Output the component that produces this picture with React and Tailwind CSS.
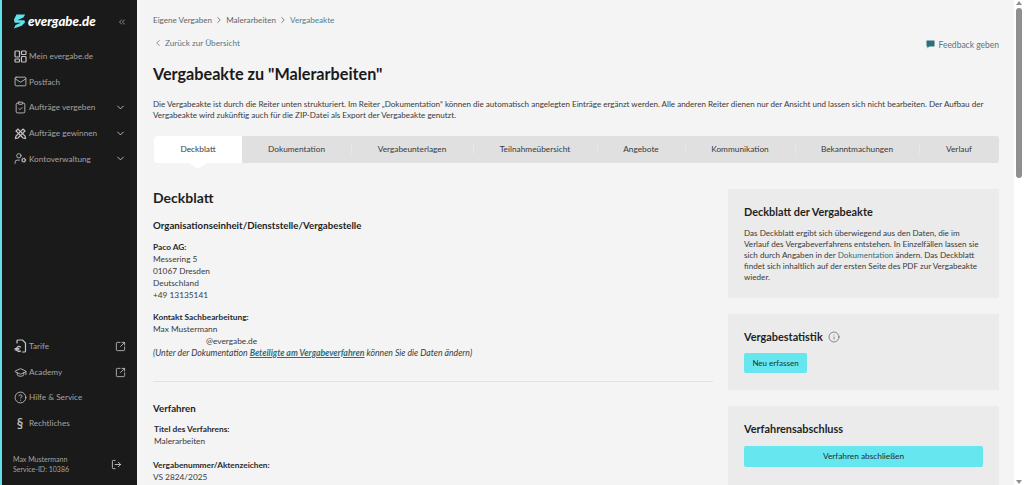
import { ChevronDown, ChevronRight, ChevronLeft, ChevronsLeft, Mail, ClipboardCheck, UserCog, GraduationCap, CircleHelp, SquareArrowOutUpRight, LogOut, Info } from 'lucide-react'

function TilesIcon() {
  return (
    <svg width="13" height="13" viewBox="0 0 13 13" fill="none" stroke="currentColor" strokeWidth="1.2">
      <rect x="1" y="1" width="4.5" height="6" rx="0.8" />
      <rect x="7.5" y="1" width="4.5" height="3.5" rx="0.8" />
      <rect x="1" y="9" width="4.5" height="3" rx="0.8" />
      <rect x="7.5" y="6.5" width="4.5" height="5.5" rx="0.8" />
    </svg>
  )
}

function CrossIcon() {
  return (
    <svg width="13" height="13" viewBox="0 0 13 13" fill="none" stroke="currentColor" strokeWidth="1.2" strokeLinecap="round">
      <path d="M2 4 L4 2 L11 9 L11.5 11.5 L9 11 Z" />
      <path d="M11 4 L9 2 L2 9 L1.5 11.5 L4 11 Z" />
    </svg>
  )
}

function EuroDocIcon() {
  return (
    <svg width="13" height="14" viewBox="0 0 13 14" fill="none" stroke="currentColor" strokeWidth="1.2" strokeLinecap="round">
      <path d="M3 4 V2 A1 1 0 0 1 4 1 H8.5 L11.5 4 V12 A1 1 0 0 1 10.5 13 H8.5" />
      <path d="M6.5 8 A2.5 2.5 0 1 0 6.5 12" />
      <path d="M1 9.5 H5 M1 10.8 H5" />
    </svg>
  )
}

const navTop = [
  { label: 'Mein evergabe.de', icon: TilesIcon },
  { label: 'Postfach', icon: Mail },
  { label: 'Aufträge vergeben', icon: ClipboardCheck, arrow: true },
  { label: 'Aufträge gewinnen', icon: CrossIcon, arrow: true },
  { label: 'Kontoverwaltung', icon: UserCog, arrow: true },
]

const navBottom = [
  { label: 'Tarife', icon: EuroDocIcon, ext: true },
  { label: 'Academy', icon: GraduationCap, ext: true },
  { label: 'Hilfe & Service', icon: CircleHelp },
  { label: 'Rechtliches', glyph: '§' },
]

const tabs = [
  { label: 'Deckblatt', w: 'w-[88px]', active: true },
  { label: 'Dokumentation', w: 'w-[109px]' },
  { label: 'Vergabeunterlagen', w: 'w-[122px]' },
  { label: 'Teilnahmeübersicht', w: 'w-[124px]' },
  { label: 'Angebote', w: 'w-[88px]' },
  { label: 'Kommunikation', w: 'w-[110px]' },
  { label: 'Bekanntmachungen', w: 'w-[124px]' },
  { label: 'Verlauf', w: 'w-[80px]' },
]

function NavRow({ item }) {
  const Icon = item.icon
  return (
    <div className="flex h-[25.6px] items-center pl-[11px] pr-[11px] text-[8.2px] text-[#a3a3a3]">
      <span className="flex w-[14px] shrink-0 justify-center text-[#c4c4c4]">
        {Icon ? <Icon size={13} strokeWidth={1.6} /> : <span className="text-[13px] font-semibold leading-none">{item.glyph}</span>}
      </span>
      <span className="ml-[2px] flex-1 whitespace-nowrap">{item.label}</span>
      {item.arrow && <ChevronDown size={11} strokeWidth={2} className="text-[#c4c4c4]" />}
      {item.ext && <SquareArrowOutUpRight size={11} strokeWidth={1.8} className="text-[#c4c4c4]" />}
    </div>
  )
}

function Sidebar() {
  return (
    <aside className="flex h-full w-[137px] shrink-0 flex-col border-l-[2px] border-[#5fe3ea] bg-[#1a1a1a]">
      <div className="flex h-[43.5px] items-center pl-[11px] pr-[10px]">
        <svg width="13" height="15" viewBox="0 0 15 16" className="shrink-0">
          <path d="M4 0 L14 0 L12 3.5 L5 6.5 L13 6.5 L14 9 L10 13 L1 16 L3 12 L9 9.5 L2 9.5 L1 6 Z" fill="#5fe3ea" />
        </svg>
        <span className="ml-[2px] flex-1 text-[13.2px] font-black italic leading-none text-white">evergabe.de</span>
        <ChevronsLeft size={10} strokeWidth={1.6} className="text-[#bdbdbd]" />
      </div>
      <nav className="flex flex-col">
        {navTop.map((item) => <NavRow key={item.label} item={item} />)}
      </nav>
      <div className="flex-1" />
      <nav className="flex flex-col">
        {navBottom.map((item) => <NavRow key={item.label} item={item} />)}
      </nav>
      <div className="mt-[18px] mb-[11px] flex items-center pl-[11px] pr-[15px] text-[7px] leading-[10px] text-[#a3a3a3]">
        <div className="flex-1">
          <div>Max Mustermann</div>
          <div>Service-ID: 10386</div>
        </div>
        <LogOut size={11} strokeWidth={1.8} className="text-[#d4d4d4]" />
      </div>
    </aside>
  )
}

function Tabs() {
  return (
    <div className="relative ml-[1px] mt-[14px] flex h-[27px] w-[845px] rounded-[3px] bg-[#e0e0e0] text-[8.3px] text-[#3a3a3a]">
      {tabs.map((t, i) => (
        <div key={t.label} className={`relative flex h-full items-center justify-center ${t.w} ${t.active ? 'rounded-l-[3px] bg-white' : ''}`}>
          {t.label}
          {i > 1 && <span className="absolute left-0 top-[9px] h-[9px] w-px bg-[#e8e8e8]" />}
          {t.active && <span className="absolute left-1/2 top-full h-0 w-0 -translate-x-1/2 border-x-[9px] border-t-[6px] border-x-transparent border-t-white" />}
        </div>
      ))}
    </div>
  )
}

function MainColumn() {
  return (
    <div className="w-[560px] shrink-0 text-[8.3px] leading-[12px] text-[#3a3a3a]">
      <h2 className="text-[14px] font-bold leading-[18px] text-[#1f1f1f]">Deckblatt</h2>
      <h3 className="mt-[11px] text-[9.7px] font-bold leading-[14px] text-[#1f1f1f]">Organisationseinheit/Dienststelle/Vergabestelle</h3>
      <div className="mt-[9px]">
        <div className="font-bold text-[#2a2a2a]">Paco AG:</div>
        <div>Messering 5</div>
        <div>01067 Dresden</div>
        <div>Deutschland</div>
        <div>+49 13135141</div>
      </div>
      <div className="mt-[10px]">
        <div className="font-bold text-[#2a2a2a]">Kontakt Sachbearbeitung:</div>
        <div>Max Mustermann</div>
        <div className="pl-[53px]">@evergabe.de</div>
        <div className="text-[8.7px] italic">
          (Unter der Dokumentation <span className="font-bold text-[#2f6f7c] underline">Beteiligte am Vergabeverfahren</span> können Sie die Daten ändern)
        </div>
      </div>
      <div className="mt-[22px] h-px bg-[#e2e2e2]" />
      <h3 className="mt-[19px] text-[9.7px] font-bold leading-[14px] text-[#1f1f1f]">Verfahren</h3>
      <div className="mt-[8px] pl-[1px]">
        <div className="font-bold text-[#2a2a2a]">Titel des Verfahrens:</div>
        <div>Malerarbeiten</div>
      </div>
      <div className="mt-[12px]">
        <div className="font-bold text-[#2a2a2a]">Vergabenummer/Aktenzeichen:</div>
        <div>VS 2824/2025</div>
      </div>
    </div>
  )
}

function SideColumn() {
  return (
    <div className="ml-[15px] flex w-[271px] shrink-0 flex-col gap-[16px]">
      <section className="h-[109px] bg-[#ebebeb] px-[16px] pt-[16px] text-[8.1px] leading-[11px] text-[#3a3a3a]">
        <h3 className="text-[10.9px] font-bold leading-[14px] text-[#1f1f1f]">Deckblatt der Vergabeakte</h3>
        <p className="mt-[9px]">
          Das Deckblatt ergibt sich überwiegend aus den Daten, die im Verlauf des Vergabeverfahrens entstehen. In Einzelfällen lassen sie sich durch Angaben in der <span className="text-[#2f6f7c]">Dokumentation</span> ändern. Das Deckblatt findet sich inhaltlich auf der ersten Seite des PDF zur Vergabeakte wieder.
        </p>
      </section>
      <section className="h-[76px] bg-[#ebebeb] px-[16px] pt-[16px]">
        <h3 className="flex items-center text-[10.9px] font-bold leading-[14px] text-[#1f1f1f]">
          Vergabestatistik
          <Info size={12} strokeWidth={1.2} className="ml-[5px] text-[#444444]" />
        </h3>
        <button className="mt-[9px] flex h-[20px] w-[63px] items-center justify-center rounded-[2px] bg-[#66e6ee] text-[8px] text-[#1f2f33]">Neu erfassen</button>
      </section>
      <section className="h-[80px] bg-[#ebebeb] px-[16px] pt-[16px]">
        <h3 className="text-[10.9px] font-bold leading-[14px] text-[#1f1f1f]">Verfahrensabschluss</h3>
        <button className="mt-[10px] flex h-[21px] w-full items-center justify-center rounded-[2px] bg-[#66e6ee] text-[8.3px] text-[#1f2f33]">Verfahren abschließen</button>
      </section>
    </div>
  )
}

export default function App() {
  return (
    <div className="flex h-screen w-full overflow-hidden bg-[#f4f4f4] font-['Lato',sans-serif]">
      <Sidebar />
      <main className="min-w-0 flex-1 overflow-hidden pl-[16px] pr-[15px]">
        <div className="mt-[13.5px] flex items-center text-[8.1px] leading-[12px] text-[#666666]">
          <span>Eigene Vergaben</span>
          <ChevronRight size={10} strokeWidth={1.6} className="mx-[2px] text-[#444444]" />
          <span>Malerarbeiten</span>
          <ChevronRight size={10} strokeWidth={1.6} className="mx-[2px] text-[#444444]" />
          <span className="text-[#4a8290]">Vergabeakte</span>
        </div>
        <div className="mt-[10px] flex items-center text-[8.2px] leading-[12px] text-[#5a7480]">
          <ChevronLeft size={10} strokeWidth={1.6} className="text-[#2f6f7c]" />
          <span className="ml-[2px]">Zurück zur Übersicht</span>
          <div className="flex-1" />
          <span className="mt-[3px] flex items-center">
            <svg width="9" height="9" viewBox="0 0 9 9"><path d="M0.5 0.5 H8.5 V6.5 H3 L1.5 8.5 V6.5 H0.5 Z" fill="#2f6f7c" /></svg>
            <span className="ml-[3px] text-[8.5px]">Feedback geben</span>
          </span>
        </div>
        <h1 className="mt-[11px] text-[16.2px] font-bold leading-[24px] text-[#1a1a1a]">Vergabeakte zu "Malerarbeiten"</h1>
        <p className="mt-[13px] text-[8.05px] leading-[11.5px] text-[#3a3a3a]">
          Die Vergabeakte ist durch die Reiter unten strukturiert. Im Reiter „Dokumentation“ können die automatisch angelegten Einträge ergänzt werden. Alle anderen Reiter dienen nur der Ansicht und lassen sich nicht bearbeiten. Der Aufbau der Vergabeakte wird zukünftig auch für die ZIP-Datei als Export der Vergabeakte genutzt.
        </p>
        <Tabs />
        <div className="mt-[26px] flex">
          <MainColumn />
          <SideColumn />
        </div>
      </main>
      <div className="flex h-full w-[10px] shrink-0 flex-col items-center bg-white">
        <span className="mt-[1px] h-0 w-0 border-x-[3px] border-b-[4px] border-x-transparent border-b-[#8f8f8f]" />
        <span className="mt-[3px] h-[170px] w-[6px] rounded-full bg-[#8f8f8f]" />
        <span className="flex-1" />
        <span className="mb-[1px] h-0 w-0 border-x-[3px] border-t-[4px] border-x-transparent border-t-[#8f8f8f]" />
      </div>
    </div>
  )
}
